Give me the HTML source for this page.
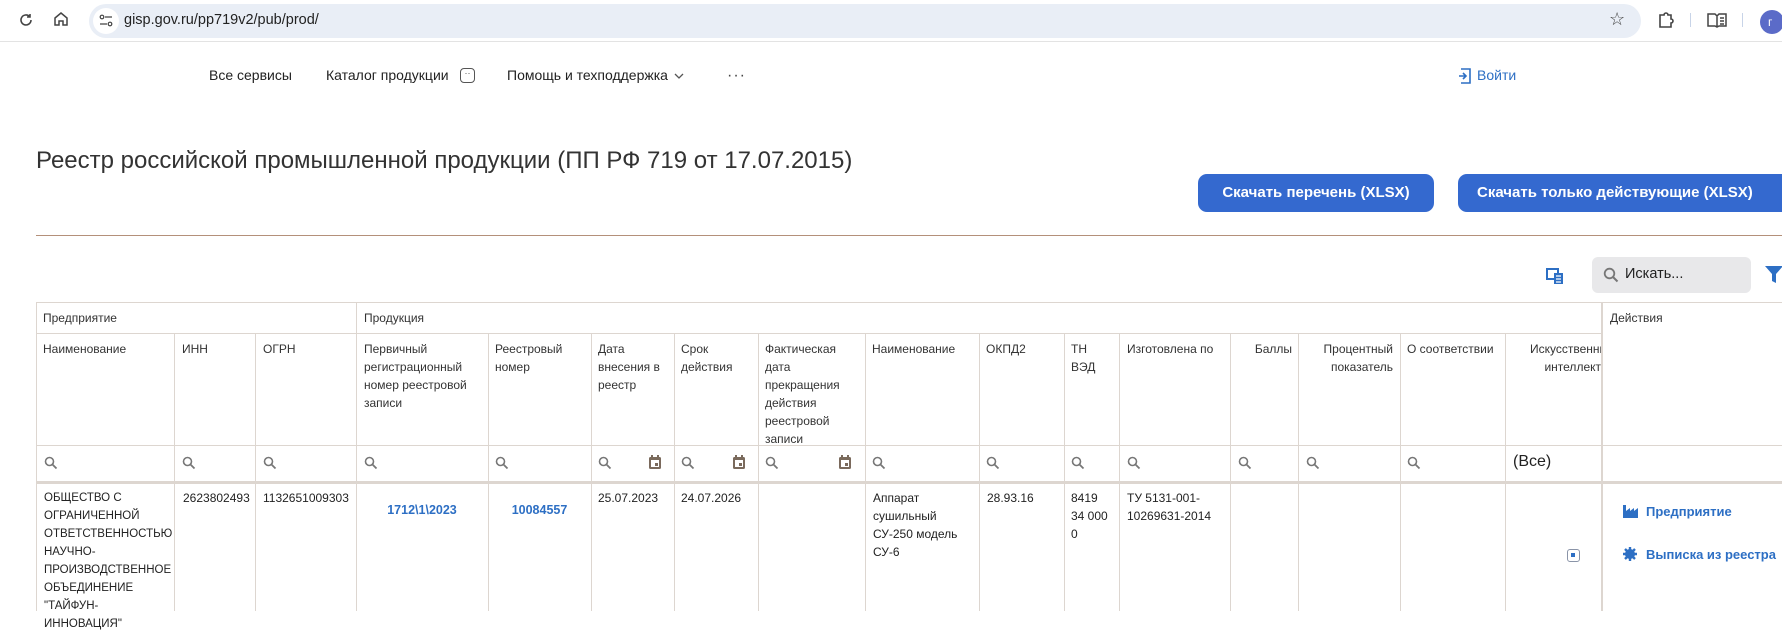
<!DOCTYPE html>
<html><head><meta charset="utf-8">
<style>
*{margin:0;padding:0;box-sizing:border-box}
body{width:1782px;height:611px;overflow:hidden;background:#fff;font-family:"Liberation Sans",sans-serif;color:#222;position:relative}
.a{position:absolute;white-space:nowrap}
.h{font-size:12px;line-height:18px;color:#333}
.d{font-size:12px;line-height:18px;color:#222}
.vl{position:absolute;width:1px;background:#ddd6d0}
.hl{position:absolute;height:1px;background:#ddd6d0}
.lnk{color:#2d6fc4;font-weight:bold;font-size:12.5px}
.q{position:absolute;width:14px;height:14px}
</style></head><body>
<div class="a" style="left:0;top:0;width:1782px;height:42px;background:#fff;border-bottom:1px solid #e3e3e3"></div>
<svg class="a" style="left:18px;top:12px" width="16" height="16" viewBox="0 0 16 16"><path d="M13 8a5 5 0 1 1-1.5-3.6M12 2v3h-3" fill="none" stroke="#444" stroke-width="1.6"/></svg>
<svg class="a" style="left:53px;top:11px" width="16" height="16" viewBox="0 0 16 16"><path d="M2 7l6-5 6 5v7h-4v-4h-4v4h-4z" fill="none" stroke="#444" stroke-width="1.5"/></svg>
<div class="a" style="left:89px;top:4px;width:1552px;height:34px;background:#e9eef6;border-radius:17px"></div>
<div class="a" style="left:93px;top:8px;width:26px;height:26px;border-radius:13px;background:#fff"></div>
<svg class="a" style="left:99px;top:14px" width="14" height="14" viewBox="0 0 14 14"><circle cx="3" cy="3" r="1.8" fill="none" stroke="#444" stroke-width="1.2"/><path d="M6 3h7M1 10h7" stroke="#444" stroke-width="1.3"/><circle cx="11" cy="10" r="1.8" fill="none" stroke="#444" stroke-width="1.2"/></svg>
<div class="a" style="left:124px;top:12px;font-size:14.5px;color:#222">gisp.gov.ru/pp719v2/pub/prod/</div>
<div class="a" style="left:1609px;top:9px;font-size:18px;color:#444">☆</div>
<svg class="a" style="left:1657px;top:11px" width="18" height="18" viewBox="0 0 18 18"><path d="M3 4h4a2 2 0 0 1 4 0h3v4a2 2 0 0 1 0 4v4H3z" fill="none" stroke="#444" stroke-width="1.6"/></svg>
<div class="a" style="left:1690px;top:13px;width:1px;height:14px;background:#c8d4e8"></div>
<svg class="a" style="left:1707px;top:12px" width="20" height="16" viewBox="0 0 20 16"><path d="M1 2h7l2 2 2-2h7v12h-7l-2 1-2-1H1zM10 4v11M13 6h4M13 9h4M13 12h4" fill="none" stroke="#444" stroke-width="1.5"/></svg>
<div class="a" style="left:1742px;top:13px;width:1px;height:14px;background:#c8d4e8"></div>
<div class="a" style="left:1760px;top:10px;width:24px;height:24px;border-radius:12px;background:#5b6bc8;color:#fff;font-size:12px;line-height:24px;padding-left:8px">г</div>
<div class="a" style="left:209px;top:67px;font-size:14px;color:#222">Все сервисы</div>
<div class="a" style="left:326px;top:67px;font-size:14px;color:#222">Каталог продукции</div>
<div class="a" style="left:460px;top:68px;width:15px;height:15px;border:1.5px solid #555;border-radius:4px;font-size:9px;line-height:8px;text-align:center;color:#555">··</div>
<div class="a" style="left:507px;top:67px;font-size:14px;color:#222">Помощь и техподдержка</div>
<svg class="a" style="left:673px;top:71px" width="12" height="10" viewBox="0 0 12 10"><path d="M2 3l4 4 4-4" fill="none" stroke="#555" stroke-width="1.3"/></svg>
<div class="a" style="left:727px;top:67px;font-size:16px;color:#444;letter-spacing:1px">···</div>
<svg class="a" style="left:1458px;top:68px" width="14" height="16" viewBox="0 0 14 16"><path d="M3 1h9v14H3M1 8h7M5 5l3 3-3 3" fill="none" stroke="#2d6fc4" stroke-width="1.6"/></svg>
<div class="a" style="left:1477px;top:67px;font-size:14px;color:#2d6fc4">Войти</div>
<div class="a" style="left:36px;top:147px;font-size:24px;color:#333">Реестр российской промышленной продукции (ПП РФ 719 от 17.07.2015)</div>
<div class="a" style="left:1198px;top:174px;width:236px;height:38px;background:#3469cf;border-radius:9px;color:#fff;font-weight:bold;font-size:15px;line-height:38px;text-align:center">Скачать перечень (XLSX)</div>
<div class="a" style="left:1458px;top:174px;width:340px;height:38px;background:#3469cf;border-radius:9px;color:#fff;font-weight:bold;font-size:15px;line-height:38px;padding-left:19px">Скачать только действующие (XLSX)</div>
<div class="a" style="left:36px;top:235px;width:1746px;height:1px;background:#b4907a"></div>
<svg class="a" style="left:1546px;top:267px" width="18" height="18" viewBox="0 0 18 18"><path d="M1 2h11v10H1z" fill="none" stroke="#2d6fc4" stroke-width="2"/><rect x="8" y="6" width="9" height="11" fill="#2d6fc4"/><path d="M10 9h5M10 12h5M10 15h5" stroke="#fff" stroke-width="1.2"/></svg>
<div class="a" style="left:1592px;top:257px;width:159px;height:36px;background:#e8e8ea;border-radius:6px"></div>
<svg class="a" style="left:1603px;top:267px" width="16" height="16" viewBox="0 0 16 16"><circle cx="6.5" cy="6.5" r="4.8" fill="none" stroke="#777" stroke-width="1.8"/><path d="M10 10l4.5 4.5" stroke="#777" stroke-width="2"/></svg>
<div class="a" style="left:1625px;top:266px;font-size:14.5px;color:#222">Искать...</div>
<svg class="a" style="left:1764px;top:265px" width="20" height="20" viewBox="0 0 20 20"><path d="M1 1h18l-7 8v9l-4-2v-7z" fill="#2d6fc4"/></svg>
<div class="hl" style="left:36px;top:302px;width:1746px"></div>
<div class="hl" style="left:36px;top:333px;width:1565px"></div>
<div class="hl" style="left:36px;top:445px;width:1746px"></div>
<div class="hl" style="left:36px;top:481px;width:1746px;height:3px"></div>
<div class="vl" style="left:36px;top:302px;height:309px"></div>
<div class="vl" style="left:356px;top:302px;height:309px"></div>
<div class="vl" style="left:1601px;top:302px;height:309px;width:2px"></div>
<div class="vl" style="left:174px;top:333px;height:278px"></div>
<div class="vl" style="left:255px;top:333px;height:278px"></div>
<div class="vl" style="left:488px;top:333px;height:278px"></div>
<div class="vl" style="left:591px;top:333px;height:278px"></div>
<div class="vl" style="left:674px;top:333px;height:278px"></div>
<div class="vl" style="left:758px;top:333px;height:278px"></div>
<div class="vl" style="left:865px;top:333px;height:278px"></div>
<div class="vl" style="left:979px;top:333px;height:278px"></div>
<div class="vl" style="left:1064px;top:333px;height:278px"></div>
<div class="vl" style="left:1119px;top:333px;height:278px"></div>
<div class="vl" style="left:1230px;top:333px;height:278px"></div>
<div class="vl" style="left:1298px;top:333px;height:278px"></div>
<div class="vl" style="left:1400px;top:333px;height:278px"></div>
<div class="vl" style="left:1505px;top:333px;height:278px"></div>
<div class="a h" style="left:43px;top:309px">Предприятие</div>
<div class="a h" style="left:364px;top:309px">Продукция</div>
<div class="a h" style="left:1610px;top:309px">Действия</div>
<div class="a h" style="left:43px;top:340px">Наименование</div>
<div class="a h" style="left:182px;top:340px">ИНН</div>
<div class="a h" style="left:263px;top:340px">ОГРН</div>
<div class="a h" style="left:364px;top:340px">Первичный<br>регистрационный<br>номер реестровой<br>записи</div>
<div class="a h" style="left:495px;top:340px">Реестровый<br>номер</div>
<div class="a h" style="left:598px;top:340px">Дата<br>внесения в<br>реестр</div>
<div class="a h" style="left:681px;top:340px">Срок<br>действия</div>
<div class="a h" style="left:765px;top:340px">Фактическая<br>дата<br>прекращения<br>действия<br>реестровой<br>записи</div>
<div class="a h" style="left:872px;top:340px">Наименование</div>
<div class="a h" style="left:986px;top:340px">ОКПД2</div>
<div class="a h" style="left:1071px;top:340px">ТН<br>ВЭД</div>
<div class="a h" style="left:1127px;top:340px">Изготовлена по</div>
<div class="a h" style="left:1230px;top:340px;width:62px;text-align:right">Баллы</div>
<div class="a h" style="left:1298px;top:340px;width:95px;text-align:right">Процентный<br>показатель</div>
<div class="a h" style="left:1407px;top:340px">О соответствии</div>
<div class="a h" style="left:1506px;top:340px;width:95px;height:40px;overflow:hidden"><div style="position:absolute;left:24px;top:0">Искусственный</div><div style="position:absolute;right:0;top:18px">интеллект</div></div>
<svg width="0" height="0" style="position:absolute"><defs><g id="mg"><circle cx="5.5" cy="5.5" r="4" fill="none" stroke="#777" stroke-width="1.6"/><path d="M8.5 8.5l4 4" stroke="#777" stroke-width="1.8"/></g><g id="cal"><rect x="1" y="2" width="12" height="12" rx="1.5" fill="#7a6a5c"/><rect x="3" y="5" width="8" height="7" fill="#fff"/><rect x="7" y="8" width="3" height="3" fill="#7a6a5c"/><rect x="3" y="0" width="2" height="3" fill="#7a6a5c"/><rect x="9" y="0" width="2" height="3" fill="#7a6a5c"/></g></defs></svg>
<svg class="q" style="left:44px;top:456px"><use href="#mg"/></svg>
<svg class="q" style="left:182px;top:456px"><use href="#mg"/></svg>
<svg class="q" style="left:263px;top:456px"><use href="#mg"/></svg>
<svg class="q" style="left:364px;top:456px"><use href="#mg"/></svg>
<svg class="q" style="left:495px;top:456px"><use href="#mg"/></svg>
<svg class="q" style="left:598px;top:456px"><use href="#mg"/></svg>
<svg class="q" style="left:648px;top:455px"><use href="#cal"/></svg>
<svg class="q" style="left:681px;top:456px"><use href="#mg"/></svg>
<svg class="q" style="left:732px;top:455px"><use href="#cal"/></svg>
<svg class="q" style="left:765px;top:456px"><use href="#mg"/></svg>
<svg class="q" style="left:838px;top:455px"><use href="#cal"/></svg>
<svg class="q" style="left:872px;top:456px"><use href="#mg"/></svg>
<svg class="q" style="left:986px;top:456px"><use href="#mg"/></svg>
<svg class="q" style="left:1071px;top:456px"><use href="#mg"/></svg>
<svg class="q" style="left:1127px;top:456px"><use href="#mg"/></svg>
<svg class="q" style="left:1238px;top:456px"><use href="#mg"/></svg>
<svg class="q" style="left:1306px;top:456px"><use href="#mg"/></svg>
<svg class="q" style="left:1407px;top:456px"><use href="#mg"/></svg>
<div class="a" style="left:1513px;top:453px;font-size:16px;color:#222">(Все)</div>
<div class="a d" style="left:44px;top:489px;font-size:11.5px">ОБЩЕСТВО С<br>ОГРАНИЧЕННОЙ<br>ОТВЕТСТВЕННОСТЬЮ<br>НАУЧНО-<br>ПРОИЗВОДСТВЕННОЕ<br>ОБЪЕДИНЕНИЕ<br>"ТАЙФУН-<br>ИННОВАЦИЯ"</div>
<div class="a d" style="left:183px;top:489px">2623802493</div>
<div class="a d" style="left:263px;top:489px">1132651009303</div>
<div class="a lnk" style="left:356px;width:132px;text-align:center;top:503px">1712\1\2023</div>
<div class="a lnk" style="left:488px;width:103px;text-align:center;top:503px">10084557</div>
<div class="a d" style="left:598px;top:489px">25.07.2023</div>
<div class="a d" style="left:681px;top:489px">24.07.2026</div>
<div class="a d" style="left:873px;top:489px">Аппарат<br>сушильный<br>СУ-250 модель<br>СУ-6</div>
<div class="a d" style="left:987px;top:489px">28.93.16</div>
<div class="a d" style="left:1071px;top:489px">8419<br>34 000<br>0</div>
<div class="a d" style="left:1127px;top:489px">ТУ 5131-001-<br>10269631-2014</div>
<div class="a" style="left:1567px;top:549px;width:13px;height:13px;border:1.5px solid #8a94a8;border-radius:3px"><div style="position:absolute;left:3px;top:3px;width:4px;height:4px;background:#2d6fc4"></div></div>
<svg class="a" style="left:1623px;top:505px" width="15" height="13" viewBox="0 0 15 13"><path d="M0 0h3v6l4-3v3l4-3v3l4-3v10H0z" fill="#2d6fc4"/></svg>
<div class="a lnk" style="left:1646px;top:504px;font-size:13px">Предприятие</div>
<svg class="a" style="left:1623px;top:547px" width="14" height="14" viewBox="0 0 14 14"><circle cx="7" cy="7" r="5" fill="#2d6fc4"/><path d="M7 0v14M0 7h14M2 2l10 10M12 2L2 12" stroke="#2d6fc4" stroke-width="2.4"/></svg>
<div class="a lnk" style="left:1646px;top:547px;font-size:13px">Выписка из реестра</div>
</body></html>
